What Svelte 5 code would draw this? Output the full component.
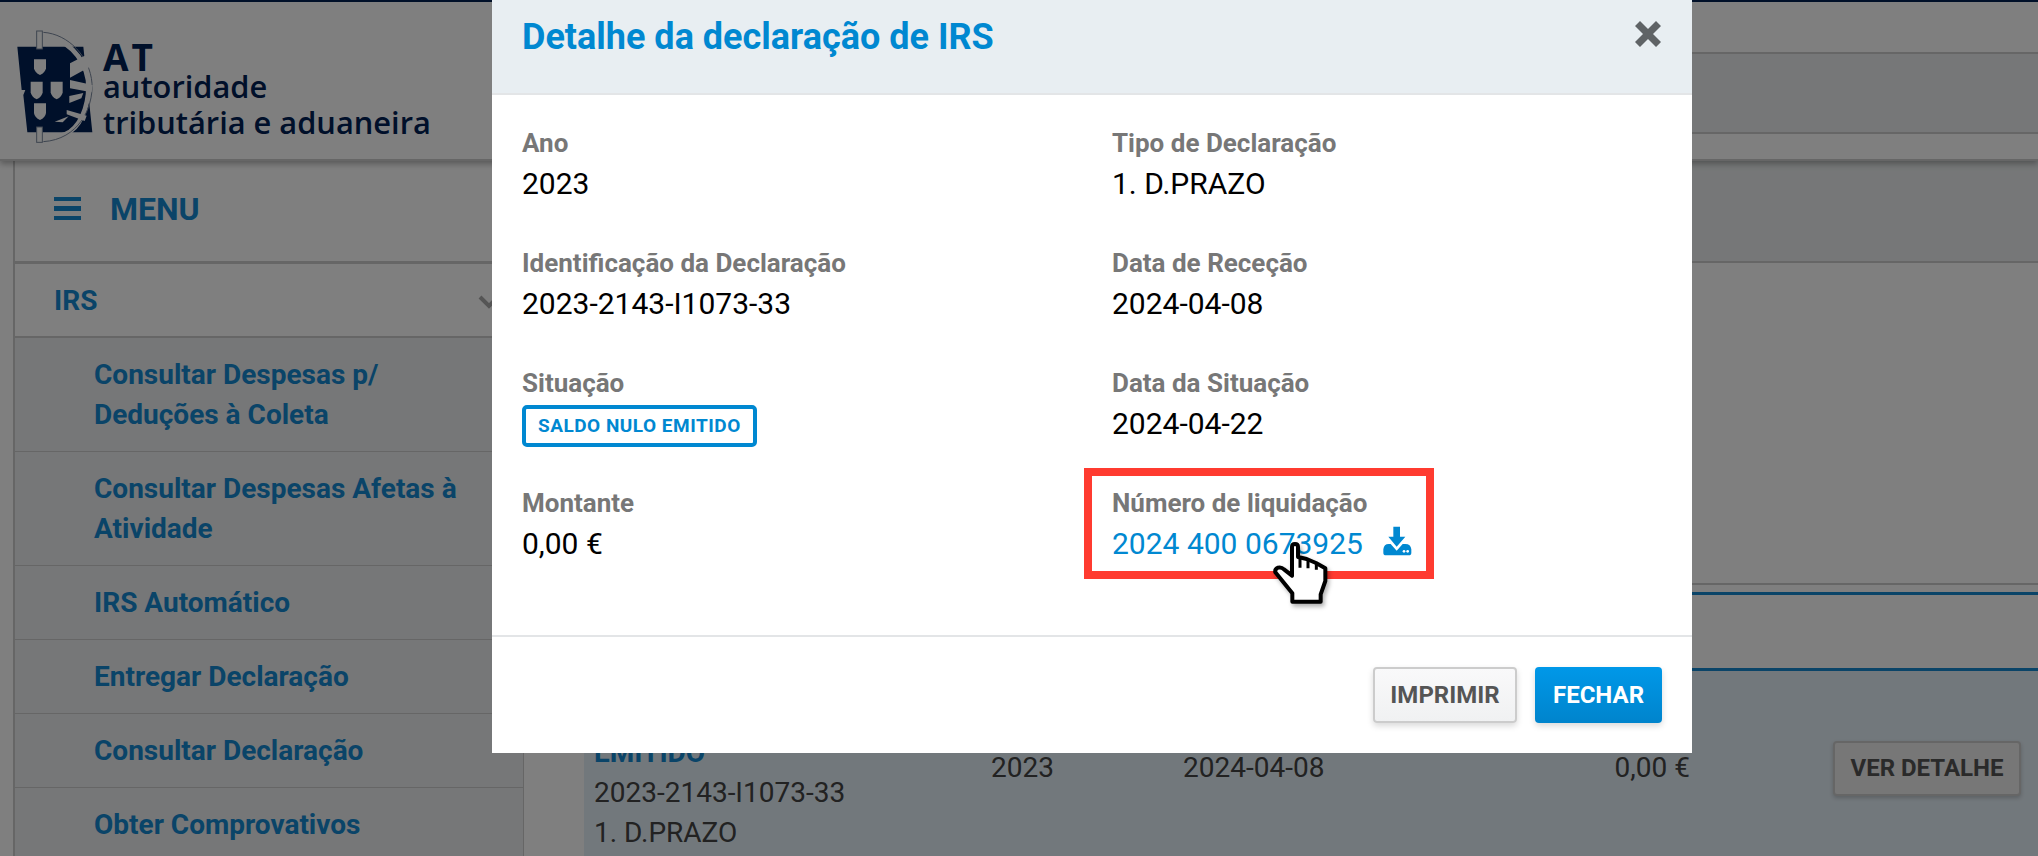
<script>
  const menu = [
    { label: "Consultar Despesas p/ Deduções à Coleta", tall: true },
    { label: "Consultar Despesas Afetas à Atividade", tall: true },
    { label: "IRS Automático" },
    { label: "Entregar Declaração" },
    { label: "Consultar Declaração" },
    { label: "Obter Comprovativos" },
  ];
</script>

<div class="page">
  <div class="topbar"></div>
  <header class="header">
    <div class="logo">
      <svg class="shield" viewBox="0 0 270 375" width="90" height="125">
        <path class="ink" d="M22 65H220L247 322H52L40 210L46 195H35Z" />
        <path class="band" d="M100 34C165 38 222 92 234 165C240 220 222 290 180 320C155 336 125 340 100 338" />
        <path class="arc" d="M100 22C175 27 240 95 246 175C250 250 205 343 100 350" />
        <path class="grey" d="M180 115L224 92L240 125L180 158Z" />
        <path class="grey" d="M180 165L248 180L245 202L180 190Z" />
        <path class="grey" d="M178 213L220 204L214 220L178 234Z" />
        <path class="grey" d="M170 255L230 272L224 288L170 268Z" />
        <path class="grey" d="M134 290L176 274L158 292Z" />
        <path class="grey" d="M72 103H108V130Q106 143 90 150Q74 143 72 130Z" />
        <path class="grey" d="M62 170H98V202Q96 216 80 223Q64 216 62 202Z" />
        <path class="grey" d="M122 170H158V202Q156 216 140 223Q124 216 122 202Z" />
        <path class="grey" d="M72 235H108V264Q106 278 90 285Q74 278 72 264Z" />
        <rect class="post" x="80" y="18" width="17" height="54" />
        <rect class="post" x="80" y="306" width="17" height="46" />
      </svg>
      <div class="wordmark">
        <span class="at">AT</span>
        <span>autoridade</span>
        <span>tributária e aduaneira</span>
      </div>
    </div>
    <div class="headnav"></div>
  </header>

  <div class="layout">
    <aside class="sidebar">
      <div class="menuhead">
        <svg width="28" height="24" viewBox="0 0 28 24">
          <path d="M0 0H27V4H0ZM0 9H27V14H0ZM0 19H27V23H0Z" />
        </svg>
        <span>MENU</span>
      </div>
      <div class="irs">
        <span>IRS</span>
        <svg class="chev" width="24" height="16" viewBox="0 0 24 16"><path d="M3 2L12 11L21 2" /></svg>
      </div>
      {#each menu as item}
        <a class="item" class:tall={item.tall} href="#top">{item.label}</a>
      {/each}
    </aside>

    <main class="main">
      <div class="mainband"></div>
      <div class="results">
        <div class="tabs"></div>
        <div class="tabbar"></div>
        <div class="row">
          <div class="who">
            <strong>SALDO NULO<br />EMITIDO</strong>
            <div>2023-2143-I1073-33</div>
            <div>1. D.PRAZO</div>
          </div>
          <div>2023</div>
          <div>2024-04-08</div>
          <div class="amount">0,00 €</div>
          <button class="ver">VER DETALHE</button>
        </div>
      </div>
    </main>
  </div>

  <div class="backdrop"></div>

  <section class="modal">
    <div class="mhead">
      <h2>Detalhe da declaração de IRS</h2>
      <svg class="close" width="26" height="26" viewBox="0 0 26 26">
        <path d="M0 5L5 0L13 8L21 0L26 5L18 13L26 21L21 26L13 18L5 26L0 21L8 13Z" />
      </svg>
    </div>
    <div class="mbody">
      <div class="field"><span class="lbl">Ano</span><p>2023</p></div>
      <div class="field"><span class="lbl">Tipo de Declaração</span><p>1. D.PRAZO</p></div>
      <div class="field"><span class="lbl">Identificação da Declaração</span><p>2023-2143-I1073-33</p></div>
      <div class="field"><span class="lbl">Data de Receção</span><p>2024-04-08</p></div>
      <div class="field"><span class="lbl">Situação</span><span class="badge">SALDO NULO EMITIDO</span></div>
      <div class="field"><span class="lbl">Data da Situação</span><p>2024-04-22</p></div>
      <div class="field"><span class="lbl">Montante</span><p>0,00 €</p></div>
      <div class="field">
        <span class="lbl">Número de liquidação</span>
        <p class="link">
          <span>2024 400 0673925</span>
          <svg width="40" height="40" viewBox="0 0 120 120">
            <path d="M52 20H72V50H88L62 80L37 50H52Z" />
            <path d="M22 88Q24 72 38 72H44L62 92L80 72H88Q104 72 106 88V98Q106 106 98 106H30Q22 106 22 98Z" />
            <circle class="dot" cx="84" cy="94" r="4" />
            <circle class="dot" cx="95" cy="94" r="4" />
          </svg>
        </p>
        <div class="redbox"></div>
        <svg class="hand" width="70" height="75" viewBox="0 0 210 225">
          <path d="M84 108V36Q84 27 93 27Q102 27 102 36V66L128 72L156 84L184 100V138L170 178V200H85V175L34 112Q32 102 42 98Q52 95 60 103L84 122Z" />
          <path class="tick" d="M108 68V98M132 76V100M157 86V104" />
        </svg>
      </div>
    </div>
    <div class="mfoot">
      <button class="btn light">IMPRIMIR</button>
      <button class="btn primary">FECHAR</button>
    </div>
  </section>
</div>

<style>
  :global(body) {
    margin: 0;
    font-family: Roboto, "Liberation Sans", sans-serif;
  }

  .page {
    position: relative;
    width: 2038px;
    height: 856px;
    overflow: hidden;
    background: #fff;
  }

  .topbar {
    height: 2px;
    background: #002255;
  }

  .header {
    position: relative;
    display: flex;
    height: 159px;
    box-sizing: border-box;
    border-bottom: 2px solid #cccccc;
    box-shadow: 0 3px 6px rgba(0, 0, 0, 0.3);
    z-index: 1;
    background: #fff;
  }

  .logo {
    display: flex;
    width: 500px;
    flex: none;
    padding: 23px 0 0 10px;
    box-sizing: border-box;
  }

  .shield {
    flex: none;
  }

  .ink {
    fill: #002055;
  }
  .band {
    fill: none;
    stroke: #ffffff;
    stroke-width: 14;
  }
  .arc {
    fill: none;
    stroke: #7c8aa0;
    stroke-width: 3;
  }
  .grey {
    fill: #ffffff;
  }
  .post {
    fill: #ffffff;
    stroke: #7c8aa0;
    stroke-width: 3;
  }

  .wordmark {
    display: flex;
    flex-direction: column;
    margin: 20px 0 0 3px;
    font-family: "Open Sans", sans-serif;
    font-weight: 600;
    font-size: 30.8px;
    line-height: 36px;
    color: #002055;
    white-space: nowrap;
  }

  .wordmark span {
    display: block;
  }

  .wordmark .at {
    font-size: 37px;
    font-weight: 700;
    letter-spacing: 3px;
    line-height: 23px;
    height: 23px;
  }

  .headnav {
    flex: 1;
    height: 78px;
    margin-top: 50px;
    background: #eceef0;
    border-top: 2px solid #cccccc;
    border-bottom: 2px solid #cccccc;
  }

  .layout {
    display: flex;
    align-items: flex-start;
    padding-left: 13px;
  }

  .sidebar {
    flex: none;
    width: 508px;
    border-left: 2px solid #cccccc;
    border-right: 1px solid #cccccc;
    color: #1488d0;
    font-weight: 700;
    font-size: 28px;
  }

  .menuhead {
    display: flex;
    align-items: center;
    gap: 28px;
    height: 95px;
    padding: 0 0 5px 39px;
    border-bottom: 3px solid #cccccc;
    font-size: 32px;
  }

  .menuhead svg {
    fill: #1488d0;
  }

  .irs {
    position: relative;
    display: flex;
    align-items: center;
    height: 72px;
    padding-left: 39px;
    border-bottom: 2px solid #cccccc;
  }

  .chev {
    position: absolute;
    left: 462px;
    top: 31px;
    fill: none;
    stroke: #aaaaaa;
    stroke-width: 4;
  }

  .item {
    display: flex;
    align-items: center;
    height: 72px;
    padding: 1px 40px 0 79px;
    margin-bottom: -1px;
    background: #eceff0;
    border-bottom: 2px solid #cccccc;
    line-height: 40px;
    color: #1488d0;
    text-decoration: none;
  }

  .item.tall {
    height: 112px;
  }

  .main {
    flex: 1;
  }

  .mainband {
    height: 100px;
    background: #eceff0;
    border-bottom: 2px solid #cccccc;
  }

  .results {
    margin-left: 60px;
  }

  .tabs {
    height: 320px;
    border-bottom: 2px solid #cccccc;
  }

  .tabbar {
    height: 73px;
    margin-top: 7px;
    border-top: 3px solid #1488d0;
  }

  .row {
    display: grid;
    grid-template-columns: 397px 192px 200px 307px 143px 188px;
    align-items: center;
    height: 194px;
    padding-left: 10px;
    border-top: 3px solid #1488d0;
    background: #e5f0f8;
    color: #444;
    font-size: 28px;
    line-height: 40px;
  }

  .who {
    padding-top: 10px;
  }

  .who strong {
    display: block;
    color: #1488d0;
    font-size: 28px;
  }

  .amount {
    text-align: right;
  }

  .ver {
    grid-column: 6;
    height: 55px;
    font: 700 24px Roboto, sans-serif;
    color: #555;
    background: #eeeeee;
    border: 2px solid #cccccc;
    border-radius: 4px;
    box-shadow: 0 2px 4px rgba(0, 0, 0, 0.2);
    padding: 0;
  }

  .backdrop {
    position: absolute;
    inset: 0;
    z-index: 2;
    background: rgba(0, 0, 0, 0.5);
  }

  .modal {
    position: absolute;
    left: 492px;
    top: 0;
    z-index: 3;
    display: flex;
    flex-direction: column;
    width: 1200px;
    height: 753px;
    background: #fff;
  }

  .mhead {
    display: flex;
    justify-content: space-between;
    align-items: flex-start;
    box-sizing: border-box;
    height: 95px;
    padding: 17px 31px 0 30px;
    background: #e8eef2;
    border-bottom: 2px solid #e3e5e7;
  }

  h2 {
    margin: 0;
    font-size: 36px;
    font-weight: 700;
    line-height: 40px;
    color: #0088d1;
  }

  .close {
    margin-top: 4px;
    fill: #5f6366;
  }

  .mbody {
    flex: 1;
    display: grid;
    grid-template-columns: 590px 1fr;
    grid-auto-rows: 120px;
    padding: 28px 30px 0 30px;
  }

  .field {
    position: relative;
  }

  .lbl {
    display: block;
    font-size: 26px;
    font-weight: 700;
    line-height: 40px;
    color: #777777;
  }

  p {
    margin: 1px 0 0;
    font-size: 30px;
    line-height: 40px;
    color: #000;
  }

  .badge {
    display: inline-block;
    box-sizing: border-box;
    height: 42px;
    margin-top: 2px;
    padding: 0 12px;
    border: 4px solid #0088d1;
    border-radius: 5px;
    font-size: 19px;
    font-weight: 700;
    letter-spacing: 0.5px;
    line-height: 34px;
    color: #0088d1;
  }

  .link {
    display: flex;
    gap: 13px;
    color: #0088d1;
  }

  .link svg {
    margin-top: -4px;
    fill: #0088d1;
  }

  .dot {
    fill: #fff;
  }

  .redbox {
    position: absolute;
    left: -28px;
    top: -15px;
    box-sizing: border-box;
    width: 350px;
    height: 111px;
    border: 8px solid #ff3b30;
  }

  .hand {
    position: absolute;
    left: 152px;
    top: 52px;
    filter: drop-shadow(2px 3px 2px rgba(0, 0, 0, 0.3));
    fill: #fff;
    stroke: #000;
    stroke-width: 12;
    stroke-linejoin: round;
  }

  .tick {
    fill: none;
    stroke-width: 9;
  }

  .mfoot {
    display: flex;
    justify-content: flex-end;
    gap: 18px;
    height: 118px;
    box-sizing: border-box;
    padding: 30px 30px 0 0;
    border-top: 2px solid #e3e5e7;
  }

  .btn {
    height: 56px;
    border-radius: 4px;
    font: 700 24px Roboto, sans-serif;
    box-shadow: 0 3px 6px rgba(0, 0, 0, 0.15);
    padding: 0;
  }

  .light {
    width: 144px;
    color: #555;
    background: linear-gradient(#f9f9fa, #f0f1f2);
    border: 2px solid #cccccc;
  }

  .primary {
    width: 127px;
    color: #fff;
    background: linear-gradient(#0098e8, #0084cc);
    border: none;
  }
</style>
